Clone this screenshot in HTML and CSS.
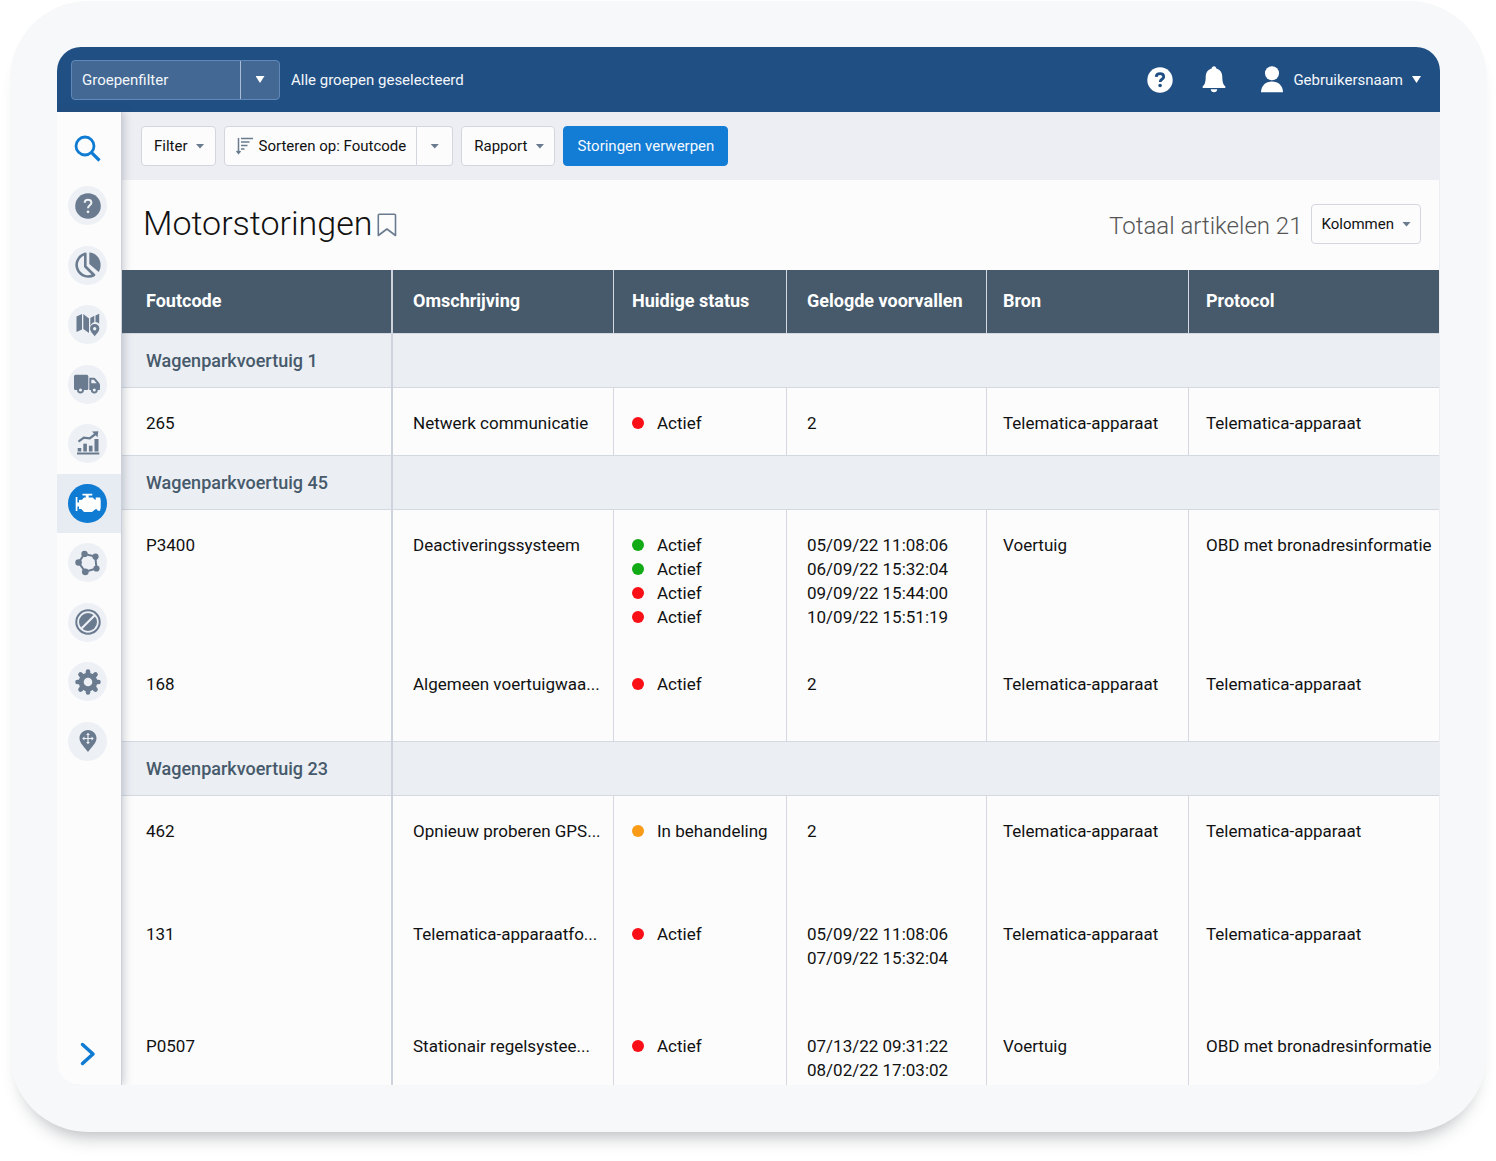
FILE: index.html
```
<!DOCTYPE html>
<html lang="nl">
<head>
    <meta charset="UTF-8">
    <meta name="viewport" content="width=device-width, initial-scale=1.0">
    <title>Motorstoringen</title>
    <link rel="stylesheet" href="styles.css">
</head>
<body>

    <div class="tablet">
        <div class="screen">

            <!-- Top bar -->
            <header class="topbar">
                <div class="group-filter">
                    <input type="text" placeholder="Groepenfilter" aria-label="Groepenfilter">
                    <button type="button" aria-label="Groepen tonen"><span class="caret"></span></button>
                </div>
                <span class="selected-groups">Alle groepen geselecteerd</span>
                <a href="#" class="top-icon" aria-label="Help">
                    <svg width="26" height="26" viewBox="0 0 26 26">
                        <circle cx="13" cy="13" r="12.7" fill="#fff"/>
                        <path d="M9.2 9.8C9.4 7.6 11 6.7 13 6.7c2.100 0 3.700 1.100 3.700 3 0 2.600-3.500 2.500-3.500 5.200" fill="none" stroke="#204f84" stroke-width="2.8"/>
                        <circle cx="13.1" cy="18.5" r="1.8" fill="#204f84"/>
                    </svg>
                </a>
                <a href="#" class="top-icon" aria-label="Meldingen">
                    <svg width="24" height="27" viewBox="0 0 24 27" fill="#fff">
                        <path d="M12 0.3c1.4 0 2.3 1 2.3 2.3 3.9 1.1 6 4.2 6 8.4 0 5.4 1.200 8 3 9.3V22H0.7v-1.7c1.8-1.3 3-3.900 3-9.300 0-4.200 2.100-7.300 6-8.400C9.7 1.3 10.6 0.3 12 0.3z"/>
                        <path d="M8.7 23.3h6.6c-0.2 1.8-1.5 3-3.3 3s-3.100-1.200-3.300-3z"/>
                    </svg>
                </a>
                <button type="button" class="user-menu">
                    <svg width="24" height="27" viewBox="0 0 24 27" fill="#fff">
                        <circle cx="12" cy="7.3" r="7"/>
                        <path d="M1 26.3C1 19.5 6 15.500 12 15.500s11 4 11 10.800z"/>
                    </svg>
                    Gebruikersnaam
                    <span class="caret"></span>
                </button>
            </header>

            <div class="body">
                <!-- Side navigation -->
                <nav class="sidebar">
                    <a href="#" class="search" aria-label="Zoeken">
                        <svg width="27" height="27" viewBox="0 0 27 27" fill="none" stroke="#0f7bd3" stroke-width="2.8">
                            <circle cx="11" cy="11" r="9"/>
                            <path d="M17.3 17.3L25.5 25.5" stroke-width="3.2"/>
                        </svg>
                    </a>
                    <ul>
                        <li>
                            <a href="#" aria-label="Help">
                                <svg width="26" height="26" viewBox="0 0 26 26">
                                    <circle cx="13" cy="13" r="12.8" fill="#6a7b90"/>
                                    <path d="M9.7 9.7C9.7 7.7 11.2 6.7 13 6.7c2 0 3.4 1.2 3.4 3 0 2.6-3.4 2.7-3.4 5.6" fill="none" stroke="#edf0f5" stroke-width="2"/>
                                    <circle cx="13" cy="18.8" r="1.4" fill="#edf0f5"/>
                                </svg>
                            </a>
                        </li>
                        <li>
                            <a href="#" aria-label="Dashboard">
                                <svg width="26" height="26" viewBox="0 0 26 26" fill="#6a7b90">
                                    <path d="M14.3 0.5C20.500 0.8 25.600 6 25.600 13c0 2.600-0.700 4.900-1.900 7L14.3 12z"/>
                                    <path d="M10.300 1.700A11.600 11.600 0 1 0 19 23L10.300 14.500z" fill="none" stroke="#6a7b90" stroke-width="2.6" stroke-linejoin="round"/>
                                </svg>
                            </a>
                        </li>
                        <li>
                            <a href="#" aria-label="Kaart">
                                <svg width="26" height="26" viewBox="0 0 26 26" fill="#6a7b90">
                                    <path d="M1.500 4.500L7 2v15.500L1.500 20z"/>
                                    <path d="M8.300 2L14 6.500v14.500l-5.700-4z"/>
                                    <path d="M15.300 6l4-2.300v6.500c-2 0.300-3.800 2-4 4.300z"/>
                                    <path d="M20.500 3.500l3.700-1.700v10c-1-1.100-2.200-1.600-3.700-1.700z"/>
                                    <path fill-rule="evenodd" d="M19.700 12c2.700 0 4.700 2 4.700 4.600 0 2.800-2.700 5-4.700 7.700-2-2.700-4.700-4.900-4.700-7.700 0-2.600 2-4.600 4.700-4.600zm0 3a1.700 1.700 0 1 0 0 3.400 1.700 1.700 0 0 0 0-3.400z"/>
                                </svg>
                            </a>
                        </li>
                        <li>
                            <a href="#" aria-label="Voertuigen">
                                <svg width="27" height="26" viewBox="0 0 27 26" fill="#6a7b90">
                                    <rect x="0" y="3.7" width="14.3" height="15.3" rx="1.5"/>
                                    <path fill-rule="evenodd" d="M15.3 6.700h4.400c0.800 0 1.400 0.300 1.900 1l3.600 4.300c0.500 0.600 0.800 1.200 0.800 2V18c0 0.700-0.300 1-1 1h-9.700zM17.300 8.700v3.600h5.400l-2.700-3.300c-0.200-0.200-0.400-0.300-0.700-0.300z"/>
                                    <circle cx="6.500" cy="19" r="2.5" fill="#edf0f5" stroke="#6a7b90" stroke-width="1.9"/>
                                    <circle cx="20.3" cy="19" r="2.5" fill="#edf0f5" stroke="#6a7b90" stroke-width="1.9"/>
                                </svg>
                            </a>
                        </li>
                        <li>
                            <a href="#" aria-label="Activiteit">
                                <svg width="26" height="26" viewBox="0 0 26 26" fill="#6a7b90">
                                    <rect x="2" y="21.5" width="22.3" height="2"/>
                                    <rect x="2.7" y="17" width="3.6" height="3.5"/>
                                    <rect x="8.3" y="12.7" width="3.6" height="7.8"/>
                                    <rect x="13.9" y="14.7" width="3.6" height="5.8"/>
                                    <rect x="19.5" y="8" width="4" height="12.5"/>
                                    <path d="M3.5 10.700l5.300-4 5.900 0.600L20.500 3" fill="none" stroke="#6a7b90" stroke-width="2.2"/>
                                    <path d="M17 0.500L23.300 0.300L22.500 6.300z"/>
                                </svg>
                            </a>
                        </li>
                        <li class="active">
                            <a href="#" aria-label="Motor en onderhoud">
                                <svg width="26" height="26" viewBox="0 0 26 26" fill="#fff">
                                    <rect x="0.7" y="7" width="1.7" height="14"/>
                                    <path d="M2 12.500h2V10l3-0.300 2-2.200h1.800V5.500H7.500V3.800h9.800v1.700h-3.600v2h4L20 9.700h0.700V7.500h4.600v2h0.400v9.300h-0.500v2h-2.500l-0.700-1.500h-1.700l-3.200 2.700H9l-2.700-3H4v-2.500H2z"/>
                                </svg>
                            </a>
                        </li>
                        <li>
                            <a href="#" aria-label="Zones">
                                <svg width="26" height="26" viewBox="0 0 26 26" fill="#6a7b90">
                                    <path d="M9.500 4L20.300 6.500L21.500 18.500L10.200 21.700L3.500 12.500z" fill="none" stroke="#6a7b90" stroke-width="2"/>
                                    <circle cx="9.500" cy="3.900" r="3.200"/>
                                    <circle cx="20.500" cy="6.700" r="3.100"/>
                                    <circle cx="21.500" cy="18.500" r="3.100"/>
                                    <circle cx="10.300" cy="21.800" r="3.400"/>
                                    <circle cx="3.600" cy="12.500" r="3.300"/>
                                </svg>
                            </a>
                        </li>
                        <li>
                            <a href="#" aria-label="Regels">
                                <svg width="26" height="26" viewBox="0 0 26 26">
                                    <circle cx="13" cy="13" r="11.7" fill="none" stroke="#6a7b90" stroke-width="2"/>
                                    <circle cx="13" cy="13" r="9" fill="#6a7b90"/>
                                    <path d="M6 20L20 6" stroke="#edf0f5" stroke-width="2.2"/>
                                </svg>
                            </a>
                        </li>
                        <li>
                            <a href="#" aria-label="Instellingen">
                                <svg width="26" height="26" viewBox="0 0 26 26">
                                    <g stroke="#6a7b90" stroke-width="4.600" stroke-linecap="round">
                                        <path d="M13 2.500V23.500M2.500 13H23.500"/>
                                        <path d="M5.500 5.500L20.500 20.500M20.500 5.500L5.500 20.500"/>
                                    </g>
                                    <circle cx="13" cy="13" r="9.3" fill="#6a7b90"/>
                                    <circle cx="13" cy="13" r="4.3" fill="#edf0f5"/>
                                </svg>
                            </a>
                        </li>
                        <li>
                            <a href="#" aria-label="Locatie">
                                <svg width="26" height="26" viewBox="0 0 26 26">
                                    <path d="M13 2c4.800 0 8.500 3.700 8.500 8.300 0 5-5 8.700-8.500 13.700-3.500-5-8.500-8.700-8.500-13.700C4.500 5.700 8.200 2 13 2z" fill="#6a7b90"/>
                                    <path d="M13 6v9M8.500 10.500h9" stroke="#edf0f5" stroke-width="1.2"/>
                                    <path d="M13 4.700l1.900 2.300h-3.800zM13 16.300l1.900-2.300h-3.800zM7.200 10.500l2.300-1.900v3.800zM18.800 10.500l-2.300-1.900v3.800z" fill="#edf0f5"/>
                                </svg>
                            </a>
                        </li>
                    </ul>
                    <button type="button" class="expand" aria-label="Menu uitklappen">
                        <svg width="18" height="26" viewBox="0 0 18 26" fill="none" stroke="#0f7bd3" stroke-width="3.5" stroke-linecap="round" stroke-linejoin="round">
                            <path d="M3.500 3.500L14 13L3.500 22.500"/>
                        </svg>
                    </button>
                </nav>

                <main>
                    <!-- Toolbar -->
                    <div class="toolbar">
                        <button type="button" class="btn">Filter <span class="caret"></span></button>
                        <div class="split">
                            <button type="button" class="btn sort">
                                <svg width="17" height="18" viewBox="0 0 17 18" fill="none" stroke="#6a7b90" stroke-width="1.5">
                                    <path d="M2.500 1v15M0.500 14l2 2.300l2-2.300"/>
                                    <path d="M5 1.500h12M5 5h8.500M5 8.500h6.500M5 12h3.500"/>
                                </svg>
                                Sorteren op: Foutcode
                            </button>
                            <button type="button" class="btn more" aria-label="Sorteeropties"><span class="caret"></span></button>
                        </div>
                        <button type="button" class="btn">Rapport <span class="caret"></span></button>
                        <button type="button" class="btn primary">Storingen verwerpen</button>
                    </div>

                    <!-- Page title -->
                    <div class="page-title">
                        <h1>Motorstoringen</h1>
                        <button type="button" class="bookmark" aria-label="Bladwijzer">
                            <svg width="20" height="24" viewBox="0 0 20 24" fill="none" stroke="#6a7b90" stroke-width="1.6" stroke-linejoin="round">
                                <path d="M1.300 22.500V2.300c0-0.700 0.400-1.100 1.100-1.100h15c0.700 0 1.100 0.400 1.100 1.100V22.500L9.900 16z"/>
                            </svg>
                        </button>
                        <span class="total">Totaal artikelen 21</span>
                        <button type="button" class="btn">Kolommen <span class="caret"></span></button>
                    </div>

                    <!-- Faults -->
                    <table>
                        <colgroup>
                            <col class="col-code">
                            <col class="col-desc">
                            <col class="col-status">
                            <col class="col-logged">
                            <col class="col-source">
                            <col>
                        </colgroup>
                        <thead>
                            <tr>
                                <th>Foutcode</th>
                                <th>Omschrijving</th>
                                <th>Huidige status</th>
                                <th>Gelogde voorvallen</th>
                                <th>Bron</th>
                                <th>Protocol</th>
                            </tr>
                        </thead>
                        <tbody>
                            <tr class="group">
                                <th>Wagenparkvoertuig 1</th>
                                <td colspan="5"></td>
                            </tr>
                            <tr>
                                <td>265</td>
                                <td>Netwerk communicatie</td>
                                <td><div class="status red">Actief</div></td>
                                <td>2</td>
                                <td>Telematica-apparaat</td>
                                <td>Telematica-apparaat</td>
                            </tr>
                            <tr class="group">
                                <th>Wagenparkvoertuig 45</th>
                                <td colspan="5"></td>
                            </tr>
                            <tr>
                                <td>P3400</td>
                                <td>Deactiveringssysteem</td>
                                <td>
                                    <div class="status green">Actief</div>
                                    <div class="status green">Actief</div>
                                    <div class="status red">Actief</div>
                                    <div class="status red">Actief</div>
                                </td>
                                <td>
                                    <div>05/09/22 11:08:06</div>
                                    <div>06/09/22 15:32:04</div>
                                    <div>09/09/22 15:44:00</div>
                                    <div>10/09/22 15:51:19</div>
                                </td>
                                <td>Voertuig</td>
                                <td>OBD met bronadresinformatie</td>
                            </tr>
                            <tr class="medium">
                                <td>168</td>
                                <td>Algemeen voertuigwaa...</td>
                                <td><div class="status red">Actief</div></td>
                                <td>2</td>
                                <td>Telematica-apparaat</td>
                                <td>Telematica-apparaat</td>
                            </tr>
                            <tr class="group">
                                <th>Wagenparkvoertuig 23</th>
                                <td colspan="5"></td>
                            </tr>
                            <tr class="tall">
                                <td>462</td>
                                <td>Opnieuw proberen GPS...</td>
                                <td><div class="status orange">In behandeling</div></td>
                                <td>2</td>
                                <td>Telematica-apparaat</td>
                                <td>Telematica-apparaat</td>
                            </tr>
                            <tr class="taller">
                                <td>131</td>
                                <td>Telematica-apparaatfo...</td>
                                <td><div class="status red">Actief</div></td>
                                <td>
                                    <div>05/09/22 11:08:06</div>
                                    <div>07/09/22 15:32:04</div>
                                </td>
                                <td>Telematica-apparaat</td>
                                <td>Telematica-apparaat</td>
                            </tr>
                            <tr class="last">
                                <td>P0507</td>
                                <td>Stationair regelsystee...</td>
                                <td><div class="status red">Actief</div></td>
                                <td>
                                    <div>07/13/22 09:31:22</div>
                                    <div>08/02/22 17:03:02</div>
                                </td>
                                <td>Voertuig</td>
                                <td>OBD met bronadresinformatie</td>
                            </tr>
                        </tbody>
                    </table>
                </main>
            </div>

        </div>
    </div>

</body>
</html>
```
FILE: styles.css
```
* {
    box-sizing: border-box;
}
body {
    margin: 0;
    padding: 1px 9px 28px 10px;
    background-color: #fff;
    font-family: Roboto, Arial, sans-serif;
    font-size: 15px;
    color: #111;
}
button, input {
    font: inherit;
    color: inherit;
}
button {
    cursor: pointer;
}
svg {
    display: block;
}
.tablet {
    padding: 46px 47px 47px;
    background-color: #f7f8fa;
    border-radius: 78px;
    box-shadow: 0 16px 18px -12px rgba(40, 45, 55, 0.35);
}
.screen {
    overflow: hidden;
    border-radius: 24px;
    background-color: #fcfcfc;
}

/* Top bar */
.topbar {
    display: flex;
    align-items: center;
    height: 65px;
    padding: 0 19px 0 14px;
    background-color: #204f84;
    color: #f4f7fb;
}
.group-filter {
    display: flex;
    width: 209px;
    height: 40px;
    border: 1px solid #6089b9;
    border-radius: 4px;
    background-color: #426893;
}
.group-filter input {
    flex: 1;
    min-width: 0;
    padding: 0 10px;
    border: none;
    background: none;
}
.group-filter input::placeholder {
    color: #f4f7fb;
    opacity: 1;
}
.group-filter button {
    display: flex;
    align-items: center;
    justify-content: center;
    width: 39px;
    padding: 0;
    border: none;
    border-left: 1px solid #a9bdd4;
    background: none;
}
.selected-groups {
    margin-left: 11px;
    margin-right: auto;
}
.top-icon {
    margin-right: 29px;
}
.user-menu {
    display: flex;
    align-items: center;
    gap: 9px;
    margin-left: 5px;
    padding: 0;
    border: none;
    background: none;
}
.caret {
    width: 9px;
    height: 5px;
    background-color: #6a7b90;
    clip-path: polygon(0 0, 100% 0, 50% 100%);
}
.topbar .caret {
    height: 7px;
    background-color: #fff;
}

/* Side navigation */
.body {
    display: flex;
}
.sidebar {
    position: relative;
    z-index: 1;
    display: flex;
    flex-direction: column;
    flex: 0 0 65px;
    border-right: 1px solid #cdd0da;
    background-color: #fcfcfc;
    box-shadow: 2px 0 8px rgba(60, 70, 90, 0.25);
}
.sidebar a {
    display: flex;
    align-items: center;
    justify-content: center;
}
.sidebar .search {
    height: 64px;
    padding: 8px 3px 0 0;
}
.sidebar ul {
    display: flex;
    flex-direction: column;
    height: 595px;
    margin: 0;
    padding: 0;
    list-style: none;
}
.sidebar li {
    display: flex;
    flex: 1;
    align-items: center;
    justify-content: center;
    padding-right: 3px;
}
.sidebar li a {
    width: 39px;
    height: 39px;
    border-radius: 50%;
    background-color: #edf0f5;
}
.sidebar li.active {
    background-color: #e7ebf2;
}
.sidebar li.active a {
    background-color: #0f7bd3;
}
.expand {
    display: flex;
    justify-content: center;
    margin-top: auto;
    margin-bottom: 18px;
    padding: 0 3px 0 0;
    border: none;
    background: none;
}

/* Toolbar */
main {
    flex: 1;
    min-width: 0;
    border-right: 1px solid #eceef2;
}
.toolbar {
    display: flex;
    align-items: center;
    gap: 8px;
    height: 68px;
    padding: 0 19px;
    background-color: #edeef3;
}
.btn {
    display: flex;
    align-items: center;
    gap: 8px;
    height: 40px;
    padding: 0 10px 0 12px;
    border: 1px solid #d3d6df;
    border-radius: 4px;
    background-color: #fcfcfc;
    white-space: nowrap;
}
.btn.primary {
    padding: 0 13px;
    border-color: #137cd5;
    background-color: #137cd5;
    color: #f4f9fe;
}
.split {
    display: flex;
}
.btn.sort {
    gap: 6px;
    padding-left: 11px;
    border-radius: 4px 0 0 4px;
}
.btn.more {
    justify-content: center;
    width: 36px;
    padding: 0;
    border-left: none;
    border-radius: 0 4px 4px 0;
}

/* Page title */
.page-title {
    display: flex;
    align-items: center;
    height: 90px;
    padding: 0 18px 2px 21px;
}
h1 {
    margin: 0;
    padding-bottom: 3px;
    font-size: 34px;
    font-weight: 300;
    line-height: 40px;
}
.bookmark {
    margin-left: 5px;
    padding: 2px 0 0;
    border: none;
    background: none;
}
.total {
    margin-left: auto;
    margin-right: 9px;
    padding-top: 3px;
    font-size: 24px;
    font-weight: 300;
    color: #555;
}
.page-title .btn {
    padding: 0 9px;
}

/* Faults table */
table {
    width: 100%;
    table-layout: fixed;
    border-collapse: separate;
    border-spacing: 0;
    font-size: 17px;
    line-height: 24px;
}
.col-code {
    width: 271px;
}
.col-desc {
    width: 221px;
}
.col-status {
    width: 173px;
}
.col-logged {
    width: 200px;
}
.col-source {
    width: 202px;
}
th, td {
    padding: 23px 0 20px 20px;
    border-right: 1px solid #d5d8e1;
    text-align: left;
    vertical-align: top;
    white-space: nowrap;
}
th:last-child, td:last-child {
    padding-left: 17px;
    border-right: none;
}
th:first-child, td:first-child {
    padding-left: 24px;
    border-right: 2px solid #cdd2dc;
}
th:nth-child(3), td:nth-child(3) {
    padding-left: 18px;
}
th:nth-child(5), td:nth-child(5) {
    padding-left: 16px;
}
thead {
    position: relative;
    z-index: 2;
}
thead th {
    height: 63px;
    padding-top: 0;
    padding-bottom: 2px;
    background-color: #465a6b;
    color: #fff;
    font-size: 18px;
    font-weight: 700;
    vertical-align: middle;
}
.group th, .group td {
    height: 55px;
    padding-top: 1px;
    padding-bottom: 0;
    border-top: 1px solid #d3d8e1;
    border-bottom: 1px solid #d3d8e1;
    background-color: #ebeef3;
    vertical-align: middle;
}
.group th {
    font-size: 18px;
    font-weight: 500;
    color: #465a6b;
}
.medium td {
    height: 92px;
}
.tall td {
    height: 103px;
}
.taller td {
    height: 112px;
}
.last td {
    padding-bottom: 3px;
}
.status {
    display: flex;
    align-items: center;
    gap: 13px;
}
.status::before {
    content: "";
    width: 12px;
    height: 12px;
    border-radius: 50%;
}
.red::before {
    background-color: #fb0f16;
}
.green::before {
    background-color: #12ab16;
}
.orange::before {
    background-color: #f99b17;
}
```
